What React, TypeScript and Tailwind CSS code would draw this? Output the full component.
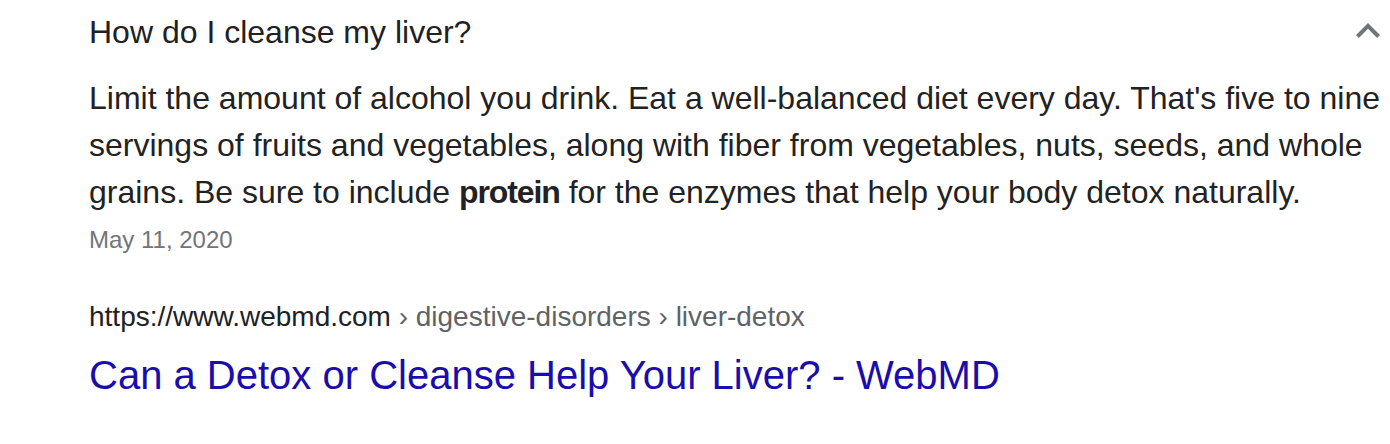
import React from "react";

export default function App() {
  const font = { fontFamily: '"Liberation Sans", Arial, sans-serif' };
  return (
    <div className="w-[1390px] h-[444px] bg-white overflow-hidden" style={font}>
      <div className="pl-[89px] pr-[10px] pt-[8px]">
        <div className="flex items-start justify-between">
          <div className="text-[32px] leading-[48px] text-[#202124]">How do I cleanse my liver?</div>
          <svg
            className="mt-[15px]"
            width="24"
            height="15"
            viewBox="6 8 12 7.41"
            fill="#70757a"
          >
            <path d="M12 8l-6 6 1.41 1.41L12 10.83l4.59 4.58L18 14z" />
          </svg>
        </div>
        <div className="mt-[19px] text-[32px] leading-[47px] text-[#222222] whitespace-nowrap">
          Limit the amount of alcohol you drink. Eat a well-balanced diet every day. That's five to nine
          <br />
          servings of fruits and vegetables, along with fiber from vegetables, nuts, seeds, and whole
          <br />
          grains. Be sure to include <b className="font-bold tracking-[-1.1px]">protein</b> for the enzymes that help your body detox naturally.
        </div>
        <div className="mt-[8px] text-[24px] leading-[32px] text-[#70757a]">May 11, 2020</div>
        <div className="mt-[43px] text-[28px] leading-[36px] whitespace-nowrap">
          <span className="text-[#202124]">https://www.webmd.com</span>
          <span className="text-[#5f6368]"> › digestive-disorders › liver-detox</span>
        </div>
        <div className="mt-[14px] text-[40px] leading-[52px] text-[#1a0dab] whitespace-nowrap">
          Can a Detox or Cleanse Help Your Liver? - WebMD
        </div>
      </div>
    </div>
  );
}
